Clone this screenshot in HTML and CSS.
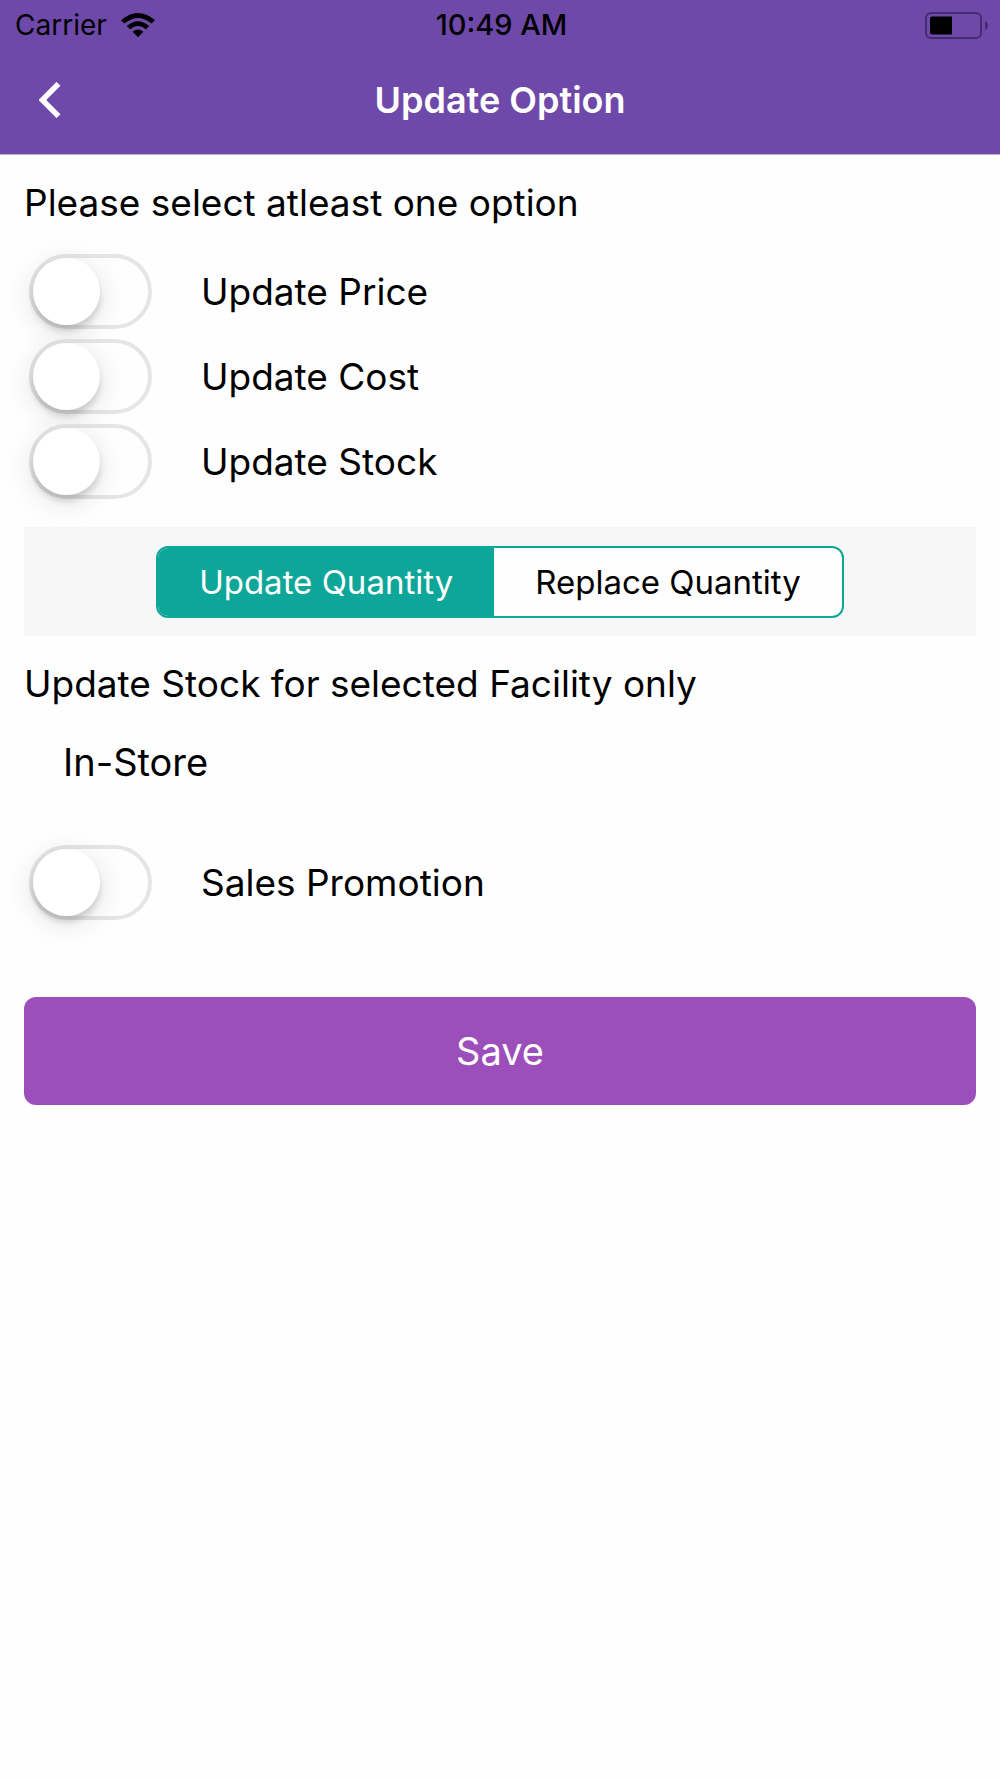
FILE: index.html
```html
<!DOCTYPE html>
<html lang="en">
<head>
    <meta charset="UTF-8">
    <meta name="viewport" content="width=device-width, initial-scale=1">
    <title>Update Option</title>
    <link rel="stylesheet" href="styles.css">
</head>
<body>
<header class="header">
    <div class="status-bar">
        <div class="status-left">
            <span>Carrier</span>
            <svg class="wifi" viewBox="0 0 34 24" aria-hidden="true">
                <path d="M0 7.2Q17-7.2 34 7.2L30.6 10.6Q17-.8 3.4 10.6Z"/>
                <path d="M5.7 12.9Q17 3.4 28.3 12.9L24.9 16.3Q17 9.8 9.1 16.3Z"/>
                <path d="M11.600 18.800Q17 14.400 22.400 18.800L17 24.200Z"/>
            </svg>
        </div>
        <span class="status-time">10:49 AM</span>
        <svg class="battery" viewBox="0 0 63 27" aria-hidden="true">
            <rect x="1" y="1" width="55" height="25" rx="5" fill="none" stroke="#452b70" stroke-width="2"/>
            <path d="M60 9Q63 10.500 63 13.500T60 18Z" fill="#452b70"/>
            <path d="M7 4.500H27V22.500H7Q5 22.500 5 20.500V6.500Q5 4.500 7 4.500Z"/>
        </svg>
    </div>
    <div class="nav-bar">
        <button type="button" class="back" aria-label="Back">
            <svg viewBox="0 0 22 36" aria-hidden="true">
                <path d="M19.500 1.800L3.300 18L19.500 34.200" fill="none" stroke="#fff" stroke-width="5.500"/>
            </svg>
        </button>
        <h1 class="nav-title">Update Option</h1>
    </div>
</header>
<form class="content">
    <h2 class="heading">Please select atleast one option</h2>
    <div class="options">
        <label class="option"><input type="checkbox" class="switch" name="price">Update Price</label>
        <label class="option"><input type="checkbox" class="switch" name="cost">Update Cost</label>
        <label class="option"><input type="checkbox" class="switch" name="stock">Update Stock</label>
    </div>
    <div class="segment-bar">
        <div class="segment">
            <input type="radio" name="mode" id="mode-update" checked>
            <label for="mode-update">Update Quantity</label>
            <input type="radio" name="mode" id="mode-replace">
            <label for="mode-replace">Replace Quantity</label>
        </div>
    </div>
    <h2 class="heading">Update Stock for selected Facility only</h2>
    <p class="facility">In-Store</p>
    <label class="option"><input type="checkbox" class="switch" name="promotion">Sales Promotion</label>
    <button type="button" class="save">Save</button>
</form>
</body>
</html>
```

FILE: styles.css
```css
* {
    box-sizing: border-box;
}
body {
    margin: 0;
    background: #fefefe;
    color: #000;
    font-family: Inter, "Liberation Sans", sans-serif;
    font-size: 37px;
    line-height: 48px;
}
h1, h2, p {
    margin: 0;
    font-size: inherit;
    font-weight: 400;
}

/* header */
.header {
    background: #6f49a9;
    border-bottom: 1px solid #b9b4c3;
}
.status-bar {
    display: grid;
    grid-template-columns: 1fr auto 1fr;
    align-items: center;
    height: 50px;
    padding: 0 12px 0 15px;
    font-size: 28px;
}
.status-left {
    display: flex;
    align-items: center;
    gap: 14px;
}
.wifi {
    width: 34px;
    height: 24px;
}
.status-time {
    font-size: 29px;
    font-weight: 500;
}
.battery {
    width: 63px;
    height: 27px;
    justify-self: end;
}
.nav-bar {
    display: grid;
    grid-template-columns: 100px 1fr 100px;
    align-items: center;
    height: 104px;
    padding-bottom: 4px;
}
.back {
    display: flex;
    justify-content: center;
    padding: 16px 0;
    border: 0;
    background: none;
    cursor: pointer;
}
.back svg {
    width: 22px;
    height: 36px;
}
.nav-title {
    color: #fff;
    font-size: 36px;
    font-weight: 600;
    text-align: center;
}

/* content */
.content {
    padding: 24px;
}
.options {
    display: grid;
    gap: 10px;
    margin: 27px 0 28px;
}
.option {
    display: flex;
    align-items: center;
    gap: 49px;
    padding-left: 5px;
}
.switch {
    appearance: none;
    flex: none;
    width: 123px;
    height: 75px;
    margin: 0;
    padding: 0;
    border: 4px solid #e5e5e5;
    border-radius: 38px;
    background: #fefefe;
    cursor: pointer;
}
.switch::before {
    content: "";
    display: block;
    width: 67px;
    height: 67px;
    border-radius: 50%;
    background: #fff;
    box-shadow: 0 6px 6px rgba(0, 0, 0, 0.14), 0 6px 30px rgba(0, 0, 0, 0.12);
}
.switch:checked {
    background: #0fa69a;
    border-color: #0fa69a;
}
.switch:checked::before {
    margin-left: auto;
}
.segment-bar {
    display: flex;
    justify-content: center;
    margin-bottom: 24px;
    padding: 19px 18px 18px;
    background: #f7f7f7;
}
.segment {
    display: flex;
    overflow: hidden;
    border: 2px solid #0fa69a;
    border-radius: 12px;
    background: #fefefe;
    font-size: 33px;
    line-height: 68px;
}
.segment input {
    position: absolute;
    opacity: 0;
}
.segment label {
    padding: 0 41px;
    cursor: pointer;
}
.segment input:checked + label {
    background: #0fa69a;
    color: #fff;
}
.facility {
    margin: 30px 0 59px;
    padding-left: 39px;
    font-size: 38px;
}
.save {
    display: block;
    width: 100%;
    margin-top: 77px;
    padding: 30px;
    border: 0;
    border-radius: 12px;
    background: #9c4fba;
    color: #fff;
    font: inherit;
    font-size: 38px;
    cursor: pointer;
}
```
